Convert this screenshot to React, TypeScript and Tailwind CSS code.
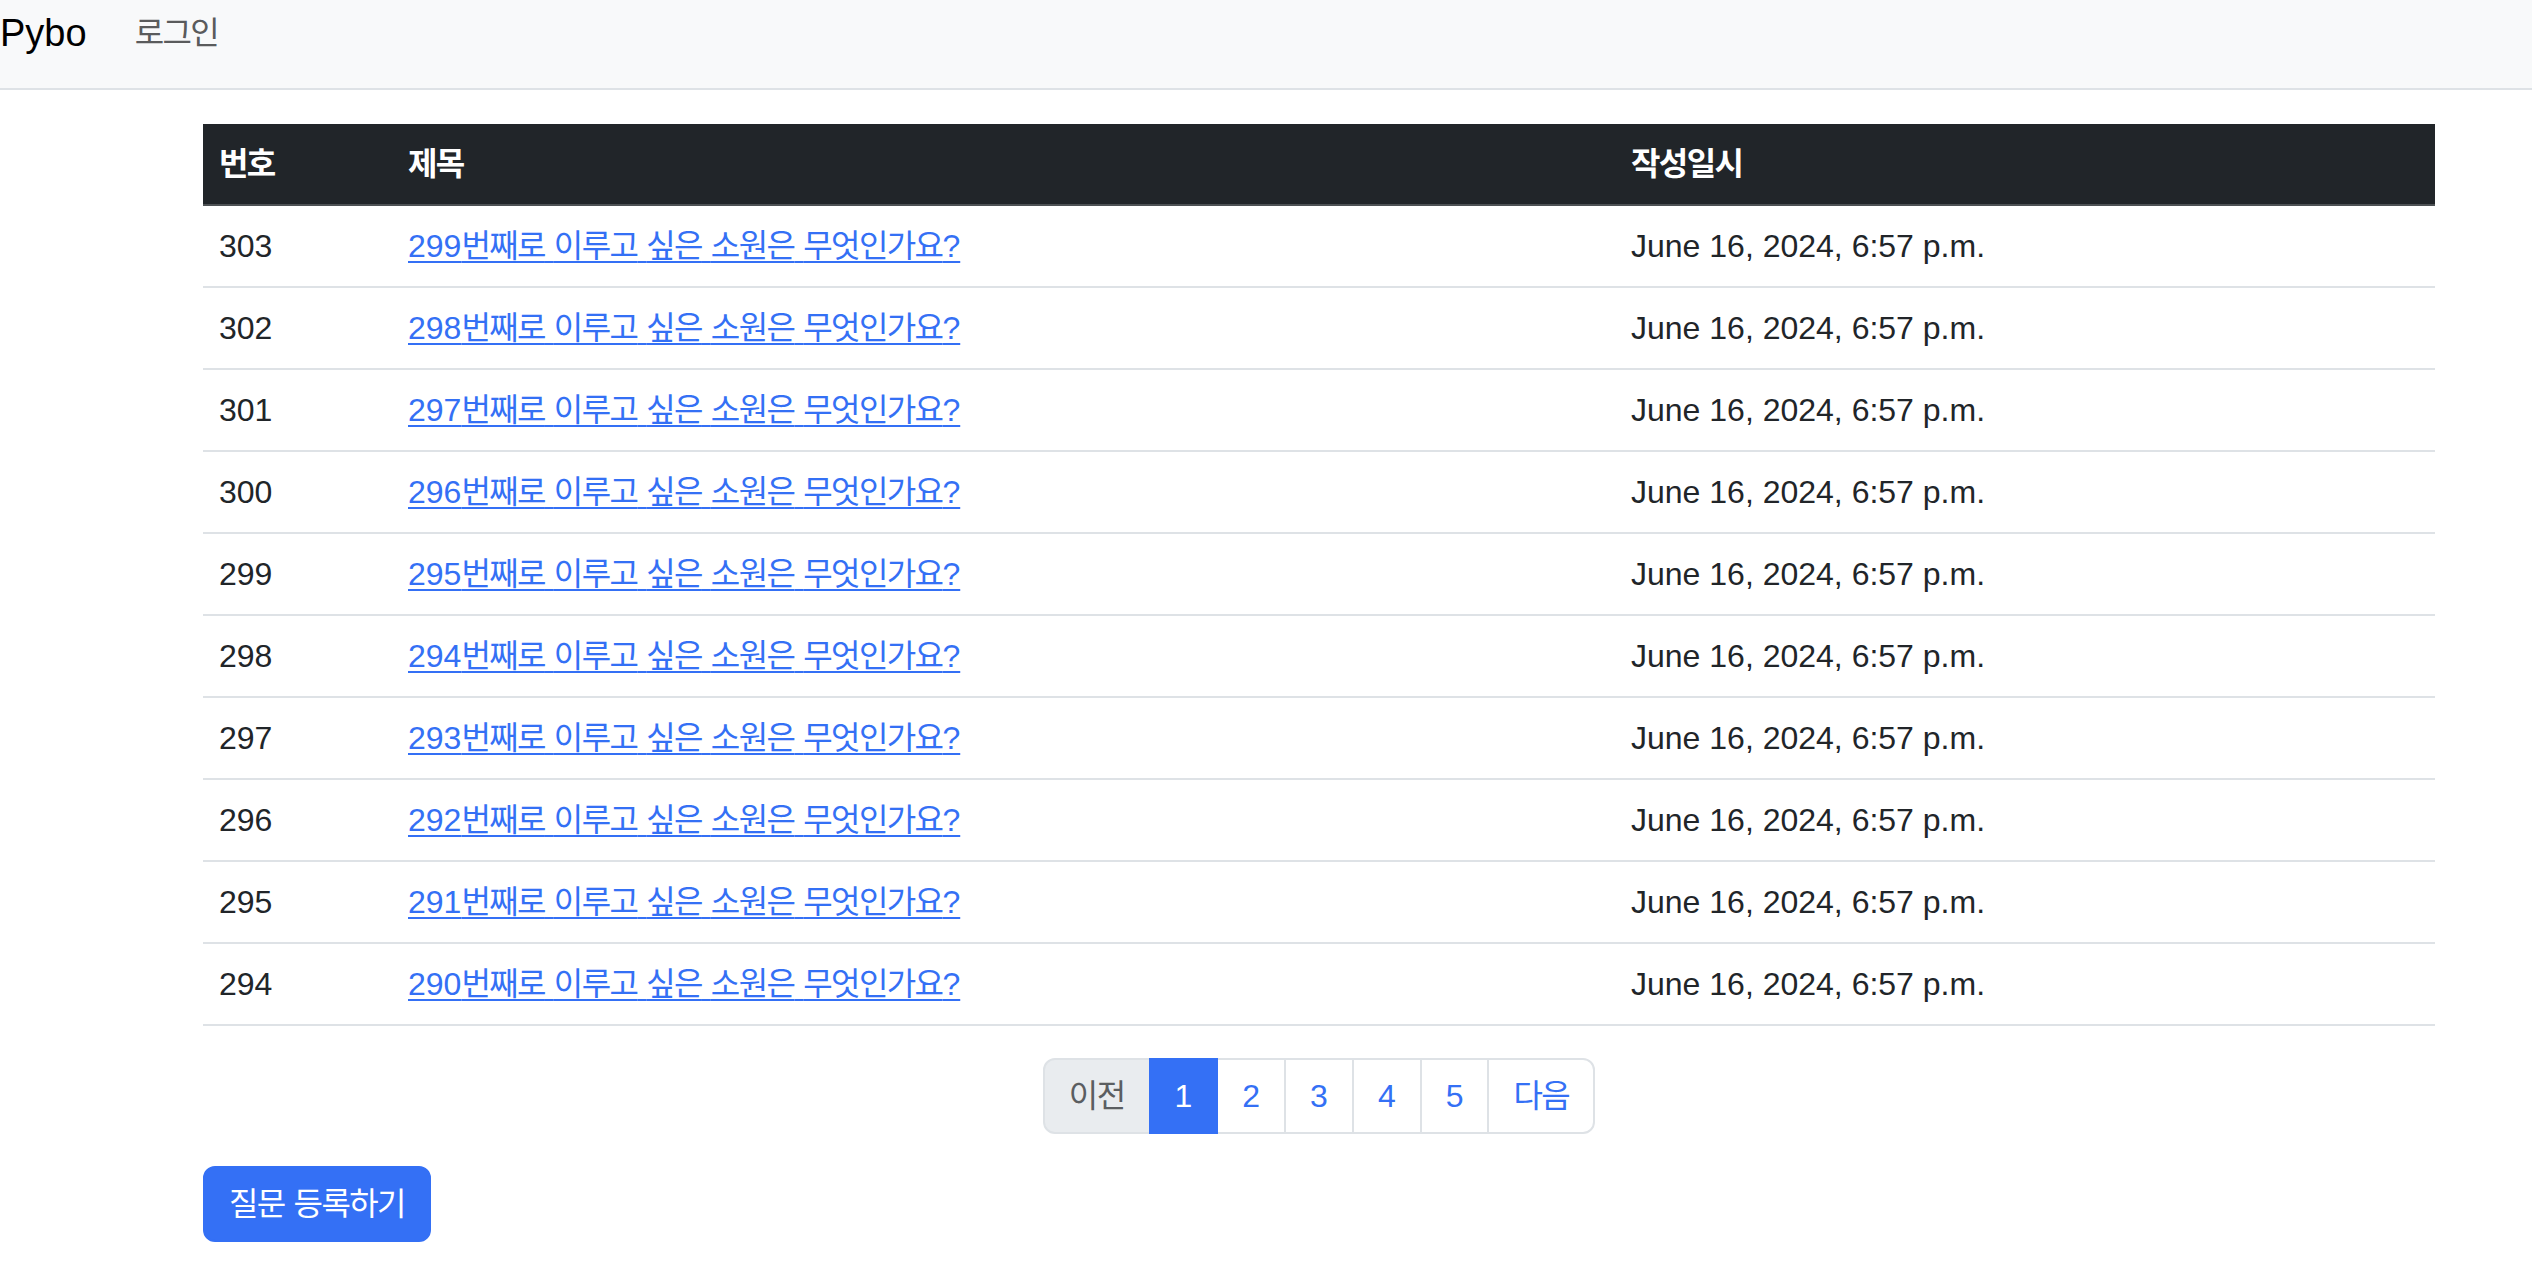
import { FC, ReactNode } from 'react';

const BLUE = 'text-[#3470f5]';

// hangul runs get a slightly narrower setting to match the original's font widths
const K: FC<{ t: string }> = ({ t }) => (
  <>
    {t.split(/([가-힣]+)/).map((s, i) =>
      /[가-힣]/.test(s) ? (
        <span key={i} className="leading-none tracking-[-1.6px]">
          {s}
        </span>
      ) : (
        s
      )
    )}
  </>
);

interface Question {
  no: number;
  subject: string;
  date: string;
}

const questions: Question[] = Array.from({ length: 10 }, (_, i) => ({
  no: 303 - i,
  subject: `${299 - i}번째로 이루고 싶은 소원은 무엇인가요?`,
  date: 'June 16, 2024, 6:57 p.m.',
}));

const PageItem: FC<{ children: ReactNode; first?: boolean; last?: boolean; active?: boolean; disabled?: boolean }> = ({
  children,
  first,
  last,
  active,
  disabled,
}) => (
  <li
    className={`relative border-2 px-[24px] py-[12px] leading-[48px] ${first ? 'rounded-l-[12px]' : '-ml-[2px]'} ${
      last ? 'rounded-r-[12px]' : ''
    } ${
      active
        ? 'z-10 border-[#3470f5] bg-[#3470f5] text-white'
        : disabled
        ? 'border-[#dee2e6] bg-[#e9ecef] text-[#5b5e61]'
        : `border-[#dee2e6] bg-white ${BLUE}`
    }`}
  >
    {children}
  </li>
);

export default function App() {
  return (
    <div className="min-h-screen bg-white font-['Liberation_Sans','Noto_Sans_CJK_KR',sans-serif] text-[32px] text-[#212529]">
      {/* 네비게이션 바 */}
      <nav className="flex h-[90px] items-center border-b-2 border-[#dee2e6] bg-[#f8f9fa] pb-[22px]">
        <span className="text-[38px] leading-[48px] text-black">Pybo</span>
        <span className="ml-[48px] leading-[48px] text-[#5a5b5c]">
          <K t="로그인" />
        </span>
      </nav>

      <div className="ml-[203px] mt-[34px] w-[2232px]">
        <table className="w-full border-collapse text-left">
          <thead>
            <tr className="bg-[#212529] text-white">
              <th className="w-[189px] border-b-2 border-[#4d5154] px-[16px] py-[16px] font-bold leading-[48px]">
                <K t="번호" />
              </th>
              <th className="w-[1223px] border-b-2 border-[#4d5154] px-[16px] py-[16px] font-bold leading-[48px]">
                <K t="제목" />
              </th>
              <th className="border-b-2 border-[#4d5154] px-[16px] py-[16px] font-bold leading-[48px]">
                <K t="작성일시" />
              </th>
            </tr>
          </thead>
          <tbody>
            {questions.map((q) => (
              <tr key={q.no}>
                <td className="border-b-2 border-[#dee2e6] px-[16px] py-[16px] leading-[48px]">{q.no}</td>
                <td className="border-b-2 border-[#dee2e6] px-[16px] py-[16px] leading-[48px]">
                  <a href="#" className={`${BLUE} underline decoration-[2px] underline-offset-[4px]`}>
                    <K t={q.subject} />
                  </a>
                </td>
                <td className="border-b-2 border-[#dee2e6] px-[16px] py-[16px] leading-[48px]">{q.date}</td>
              </tr>
            ))}
          </tbody>
        </table>

        {/* 페이지네이션 */}
        <ul className="mt-[32px] flex justify-center">
          <PageItem first disabled>
            <K t="이전" />
          </PageItem>
          <PageItem active>1</PageItem>
          <PageItem>2</PageItem>
          <PageItem>3</PageItem>
          <PageItem>4</PageItem>
          <PageItem>5</PageItem>
          <PageItem last>
            <K t="다음" />
          </PageItem>
        </ul>

        <button className="mt-[32px] rounded-[12px] border-2 border-[#3470f5] bg-[#3470f5] px-[24px] py-[12px] leading-[48px] text-white">
          <K t="질문 등록하기" />
        </button>
      </div>
    </div>
  );
}
